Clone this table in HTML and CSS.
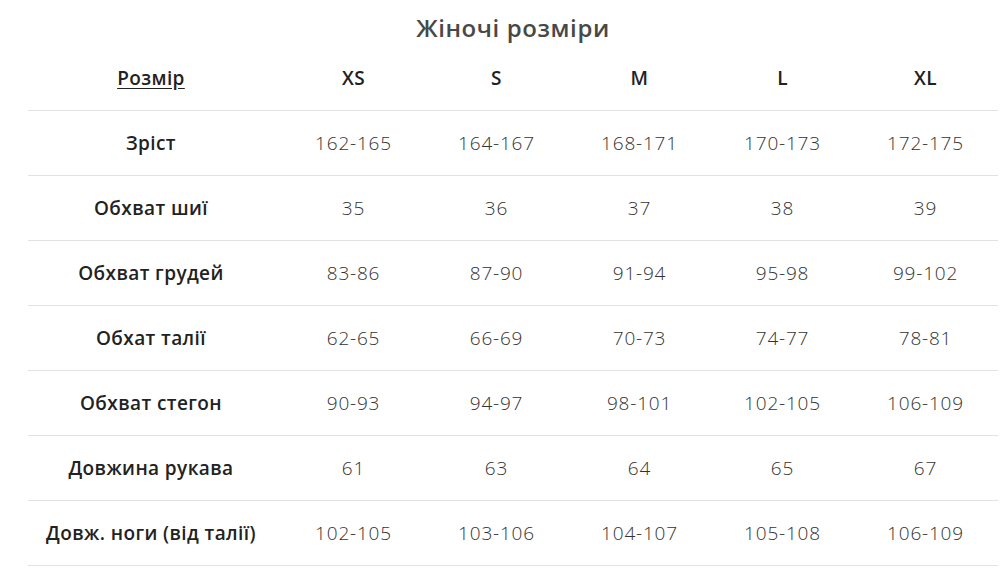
FILE: index.html
```html
<!DOCTYPE html>
<html lang="uk">
<head>
<meta charset="utf-8">
<title>Жіночі розміри</title>
<link rel="stylesheet" href="styles.css">
</head>
<body>
<div class="page">
  <h2 class="title">Жіночі розміри</h2>
  <div class="table">
    <div class="row head">
      <div class="cell label"><span class="link">Розмір</span></div>
      <div class="cell hd">XS</div>
      <div class="cell hd">S</div>
      <div class="cell hd">M</div>
      <div class="cell hd">L</div>
      <div class="cell hd">XL</div>
    </div>
    <div class="row">
      <div class="cell label">Зріст</div>
      <div class="cell">162-165</div><div class="cell">164-167</div><div class="cell">168-171</div><div class="cell">170-173</div><div class="cell">172-175</div>
    </div>
    <div class="row">
      <div class="cell label">Обхват шиї</div>
      <div class="cell">35</div><div class="cell">36</div><div class="cell">37</div><div class="cell">38</div><div class="cell">39</div>
    </div>
    <div class="row">
      <div class="cell label">Обхват грудей</div>
      <div class="cell">83-86</div><div class="cell">87-90</div><div class="cell">91-94</div><div class="cell">95-98</div><div class="cell">99-102</div>
    </div>
    <div class="row">
      <div class="cell label">Обхат талії</div>
      <div class="cell">62-65</div><div class="cell">66-69</div><div class="cell">70-73</div><div class="cell">74-77</div><div class="cell">78-81</div>
    </div>
    <div class="row">
      <div class="cell label">Обхват стегон</div>
      <div class="cell">90-93</div><div class="cell">94-97</div><div class="cell">98-101</div><div class="cell">102-105</div><div class="cell">106-109</div>
    </div>
    <div class="row">
      <div class="cell label">Довжина рукава</div>
      <div class="cell">61</div><div class="cell">63</div><div class="cell">64</div><div class="cell">65</div><div class="cell">67</div>
    </div>
    <div class="row">
      <div class="cell label">Довж. ноги (від талії)</div>
      <div class="cell">102-105</div><div class="cell">103-106</div><div class="cell">104-107</div><div class="cell">105-108</div><div class="cell">106-109</div>
    </div>
  </div>
</div>
</body>
</html>
```
FILE: styles.css
```css
* { box-sizing: border-box; }
html, body { margin: 0; padding: 0; background: #fff; }
body {
  font-family: "Open Sans", "Noto Sans", sans-serif;
  color: #333;
}
.page {
  width: 1008px;
  padding: 0 10px 0 28px;
}
.title {
  margin: 0;
  height: 46px;
  padding-top: 12px;
  line-height: 32px;
  font-size: 24px;
  font-weight: 600;
  letter-spacing: 0.6px;
  color: #484848;
  text-align: center;
  width: 970px;
}
.table {
  width: 970px;
}
.row {
  display: grid;
  grid-template-columns: 254px repeat(5, 143px);
  height: 65px;
  align-items: center;
  border-bottom: 1px solid #e2e2e2;
}
.cell {
  text-align: center;
  font-size: 19px;
  font-weight: 300;
  letter-spacing: 0.8px;
  color: #333;
  line-height: 24px;
}
.label {
  font-weight: 600;
  letter-spacing: 0.4px;
  color: #222;
  padding-right: 8px;
}
.hd {
  font-weight: 600;
  letter-spacing: 0.4px;
  color: #222;
}
.link {
  text-decoration: underline;
  text-underline-offset: 3px;
}
```
